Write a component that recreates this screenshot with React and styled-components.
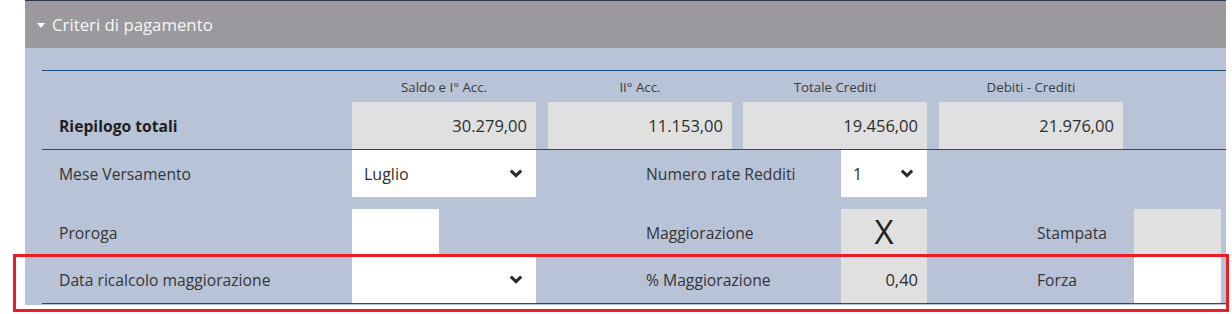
import React from 'react';
import styled, { createGlobalStyle } from 'styled-components';

const GlobalStyle = createGlobalStyle`
  html, body {
    margin: 0;
    padding: 0;
    background: #ffffff;
    font-family: 'Open Sans', 'Noto Sans', sans-serif;
  }
`;

const Page = styled.div`
  position: relative;
  width: 1232px;
  height: 314px;
  overflow: hidden;
`;

const Panel = styled.section`
  margin-left: 25px;
  width: 1201px;
  background-color: #b8c3d7;
  border-top: 1px solid #2d3b4e;
`;

const PanelHeader = styled.div`
  height: 47px;
  background-color: #9b999d;
  display: flex;
  align-items: center;
  padding-left: 12px;
  gap: 7px;
  color: #f7f7f7;
  font-size: 16.8px;
`;

const Caret = styled.span`
  width: 0;
  height: 0;
  border-left: 4px solid transparent;
  border-right: 4px solid transparent;
  border-top: 5px solid #ffffff;
  margin-top: 1px;
`;

const PanelBody = styled.div`
  padding: 22px 0 1px 17px;
`;

const Totals = styled.div`
  border-top: 1px solid #1c4f80;
  border-bottom: 1px solid #1c4f80;
`;

const TotalsRow = styled.div`
  display: grid;
  grid-template-columns: 310px 196px 195px 196px 184px;
  height: ${({ $h }) => $h}px;
  align-items: center;
`;

const ColumnTitle = styled.div`
  width: 184px;
  text-align: center;
  font-size: 13.3px;
  color: #3c3c3c;
`;

const Label = styled.div`
  padding-left: ${({ $indent }) => $indent}px;
  font-size: 15.7px;
  font-weight: ${({ $bold }) => ($bold ? 700 : 400)};
  color: ${({ $bold }) => ($bold ? '#1f1f1f' : '#353535')};
  white-space: nowrap;
`;

const Box = styled.div`
  width: ${({ $w }) => $w}px;
  height: 100%;
  box-sizing: border-box;
  background-color: ${({ $white }) => ($white ? '#ffffff' : '#e0e0e0')};
  display: flex;
  align-items: center;
  justify-content: flex-end;
  padding-right: 9px;
  font-size: 16.5px;
  color: #2e2e2e;
`;

const Form = styled.div`
  border-bottom: 1px solid #1c4f80;
`;

const FormRow = styled.div`
  display: grid;
  grid-template-columns: 310px 196px 293px 98px 195px 87px;
  height: 47px;
  margin-bottom: ${({ $gap }) => $gap || 0}px;
  align-items: center;
`;

const Select = styled.div`
  width: ${({ $w }) => $w}px;
  height: 100%;
  box-sizing: border-box;
  background-color: #ffffff;
  display: flex;
  align-items: center;
  justify-content: space-between;
  padding: 0 13px 0 12px;
  font-size: 16px;
  color: #2e2e2e;
`;

const BigMark = styled(Box)`
  justify-content: center;
  padding: 0 0 2px 0;
  font-size: 33px;
  font-weight: 400;
  color: #222222;
`;

const Highlight = styled.div`
  position: absolute;
  left: 13px;
  top: 254px;
  width: 1216px;
  height: 58px;
  box-sizing: border-box;
  border: 3px solid #ec1c24;
  pointer-events: none;
`;

const Chevron = () => (
  <svg width="14" height="9" viewBox="0 0 14 9">
    <path d="M1.8 1.6 L7 6.6 L12.2 1.6" fill="none" stroke="#2a2a2a" strokeWidth="3" />
  </svg>
);

const columns = ['Saldo e I° Acc.', 'II° Acc.', 'Totale Crediti', 'Debiti - Crediti'];
const totals = ['30.279,00', '11.153,00', '19.456,00', '21.976,00'];

const App = () => (
  <Page>
    <GlobalStyle />
    <Panel>
      <PanelHeader>
        <Caret />
        Criteri di pagamento
      </PanelHeader>
      <PanelBody>
        <Totals>
          <TotalsRow $h={31}>
            <div />
            {columns.map((c) => (
              <ColumnTitle key={c}>{c}</ColumnTitle>
            ))}
          </TotalsRow>
          <TotalsRow $h={47}>
            <Label $indent={17} $bold>
              Riepilogo totali
            </Label>
            {totals.map((t) => (
              <Box $w={184} key={t}>
                {t}
              </Box>
            ))}
          </TotalsRow>
        </Totals>
        <Form>
          <FormRow $gap={12}>
            <Label $indent={17}>Mese Versamento</Label>
            <Select $w={184}>
              Luglio
              <Chevron />
            </Select>
            <Label $indent={98}>Numero rate Redditi</Label>
            <Select $w={86}>
              1
              <Chevron />
            </Select>
          </FormRow>
          <FormRow>
            <Label $indent={17}>Proroga</Label>
            <Box $w={87} $white />
            <Label $indent={98}>Maggiorazione</Label>
            <BigMark $w={86}>X</BigMark>
            <Label $indent={98}>Stampata</Label>
            <Box $w={87} />
          </FormRow>
          <FormRow>
            <Label $indent={17}>Data ricalcolo maggiorazione</Label>
            <Select $w={184}>
              <span />
              <Chevron />
            </Select>
            <Label $indent={98}>% Maggiorazione</Label>
            <Box $w={86}>0,40</Box>
            <Label $indent={98}>Forza</Label>
            <Box $w={87} $white />
          </FormRow>
        </Form>
      </PanelBody>
    </Panel>
    <Highlight />
  </Page>
);

export default App;
